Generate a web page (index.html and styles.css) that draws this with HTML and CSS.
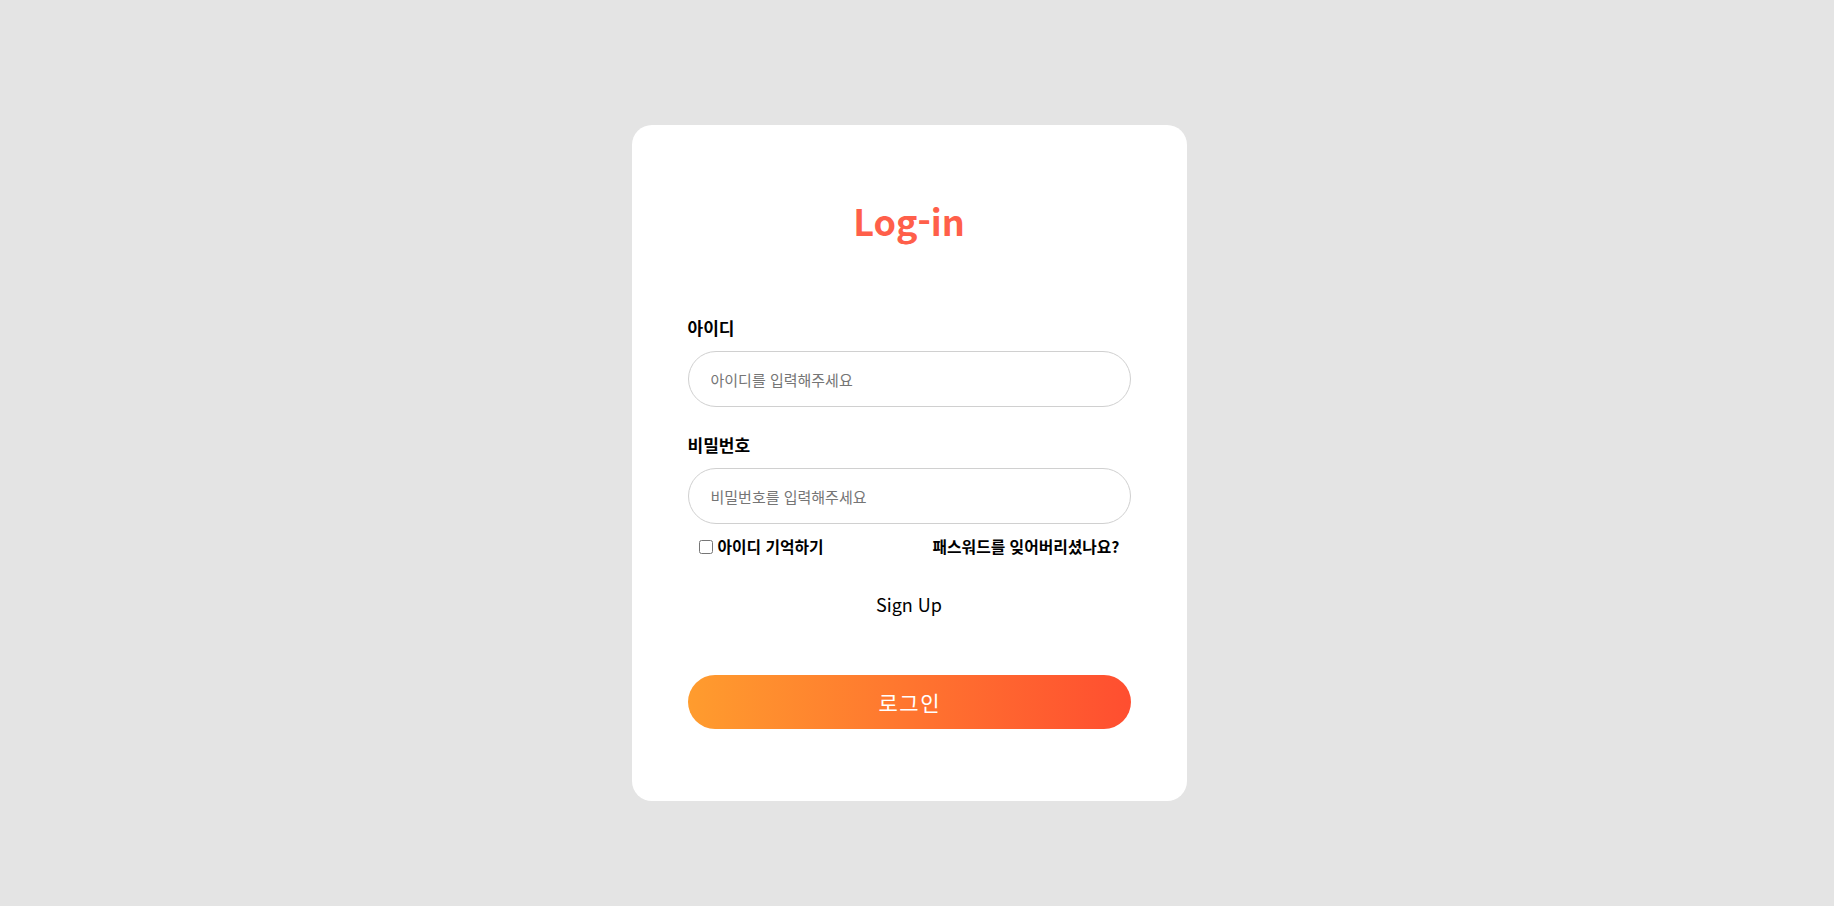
FILE: index.html
```html
<!DOCTYPE html>
<html lang="ko">
<head>
    <meta charset="UTF-8">
    <meta name="viewport" content="width=device-width, initial-scale=1.0">
    <title>Log-in</title>
    <link rel="stylesheet" href="styles.css">
</head>
<body>
    <div class="wrap">
        <form class="login-box">
            <h1 class="title">Log-in</h1>

            <label class="field-label" for="userId">아이디</label>
            <input class="field-input" id="userId" type="text" placeholder="아이디를 입력해주세요">

            <label class="field-label second" for="userPw">비밀번호</label>
            <input class="field-input" id="userPw" type="password" placeholder="비밀번호를 입력해주세요">

            <div class="options">
                <label class="remember"><input type="checkbox">아이디 기억하기</label>
                <a class="forgot" href="#">패스워드를 잊어버리셨나요?</a>
            </div>

            <a class="signup" href="#">Sign Up</a>

            <button class="login-btn" type="button">로그인</button>
        </form>
    </div>
</body>
</html>
```

FILE: styles.css
```css
html, body {
    height: 100%;
}
body {
    margin: 0;
    background-color: #e4e4e4;
    font-family: 'Noto Sans CJK KR', 'Noto Sans', sans-serif;
    color: #000000;
}
.wrap {
    display: flex;
    justify-content: center;
    padding: 125px 16px 0 0;
}
.login-box {
    width: 555px;
    box-sizing: border-box;
    padding: 77px 56px 72px;
    background-color: #ffffff;
    border-radius: 20px;
    display: flex;
    flex-direction: column;
}
.title {
    margin: 0 0 80px;
    font-size: 36px;
    line-height: 1;
    font-weight: 700;
    color: #ff5f4a;
    text-align: center;
}
.field-label {
    display: block;
    font-size: 17px;
    line-height: 20px;
    font-weight: 700;
    margin-bottom: 13px;
}
.field-label.second {
    margin-top: 28px;
}
.field-input {
    height: 56px;
    box-sizing: border-box;
    border: 1px solid #d0d0d0;
    border-radius: 28px;
    padding: 0 22px;
    font-family: inherit;
    font-size: 15px;
    outline: none;
}
.field-input::placeholder {
    color: #757575;
}
.options {
    display: flex;
    justify-content: space-between;
    align-items: center;
    padding: 0 11px;
    margin-top: 13px;
    font-size: 15.8px;
    line-height: 20px;
    font-weight: 700;
}
.remember {
    display: flex;
    align-items: center;
}
.remember input {
    width: 14px;
    height: 14px;
    margin: 0 5px 0 0;
}
.forgot {
    color: #000000;
    text-decoration: none;
}
.signup {
    align-self: center;
    margin-top: 35px;
    font-size: 18px;
    line-height: 24px;
    color: #000000;
    text-decoration: none;
}
.login-btn {
    margin-top: 59px;
    height: 54px;
    border: none;
    border-radius: 27px;
    background: linear-gradient(to right, #ff9c2e, #ff4e30);
    color: #ffffff;
    font-family: inherit;
    font-size: 21px;
    letter-spacing: 1.5px;
    text-indent: 1.5px;
    cursor: pointer;
}
```
